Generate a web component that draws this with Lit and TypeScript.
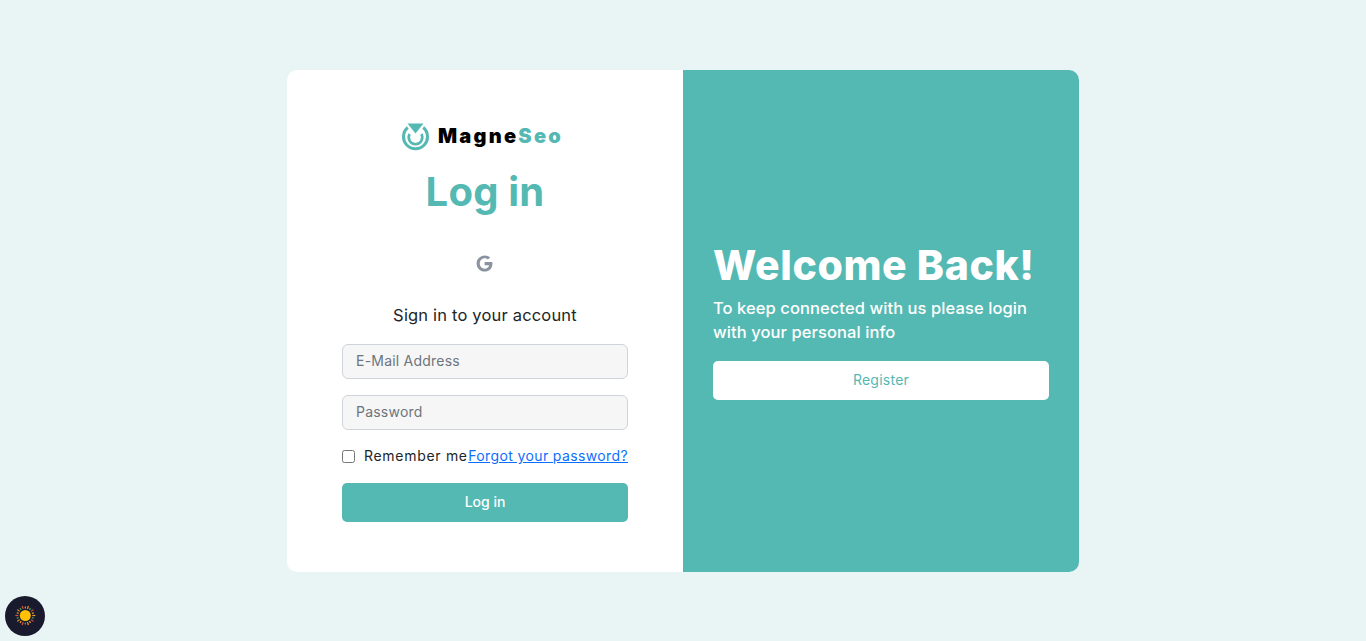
import { LitElement, html, svg, css } from "lit";
import { customElement } from "lit/decorators.js";

@customElement("app-root")
export class AppRoot extends LitElement {
  static styles = css`
    :host { display: block; height: 641px; background: #e9f5f5; font-family: Inter, "Open Sans", sans-serif; position: relative; overflow: hidden; }
    .page { height: 641px; display: flex; justify-content: center; padding-top: 70px; box-sizing: border-box; }
    .card { width: 792px; height: 502px; display: flex; border-radius: 10px; overflow: hidden; }
    .left { width: 396px; background: #fff; padding: 0 55px; box-sizing: border-box; display: flex; flex-direction: column; align-items: center; }
    .logo { margin-top: 53px; height: 28px; display: flex; align-items: center; gap: 9px; margin-left: -5px; }
    .logo svg { display: block; }
    .brand { font-size: 20px; font-weight: 900; letter-spacing: 2.25px; color: #000; line-height: 28px; padding-bottom: 2px; }
    .brand span { color: #55b9b3; }
    h1 { margin: 17px 0 0; font-size: 40px; line-height: 48px; font-weight: 700; color: #55b9b3; letter-spacing: 0.2px; }
    .g { margin-top: 38px; margin-left: -1px; display: block; }
    .sign { margin: 30px 0 0; font-size: 16.5px; line-height: 24px; color: #212529; letter-spacing: 0.18px; }
    .field { width: 100%; height: 35px; box-sizing: border-box; margin-top: 16px; border: 1px solid #ced4da; border-radius: 6px; background: #f6f6f6; padding: 0 13px 2px; display: flex; align-items: center; font-size: 14px; color: #6c757d; letter-spacing: 0.22px; }
    .sign + .field { margin-top: 17px; }
    .row { width: 100%; display: flex; justify-content: space-between; align-items: center; margin-top: 16px; height: 21px; font-size: 14px; line-height: 20px; color: #212529; white-space: nowrap; }
    .check { display: flex; align-items: center; gap: 9px; letter-spacing: 0.7px; }
    .box { width: 13px; height: 13px; box-sizing: border-box; border: 1px solid #767676; border-radius: 2.5px; background: #fff; }
    .rowtext { margin-top: -1px; }
    a { color: #0d6efd; text-decoration: underline; letter-spacing: 0.38px; margin-top: -1px; }
    .btn { width: 100%; height: 39px; margin-top: 16px; border-radius: 5px; background: #55b9b3; color: #fff; font-size: 14px; font-weight: 500; display: flex; align-items: center; justify-content: center; padding-bottom: 2px; box-sizing: border-box; }
    .right { width: 396px; background: #55b9b3; padding: 0 30px; box-sizing: border-box; display: flex; flex-direction: column; justify-content: center; color: #fff; }
    h2 { margin: -1px 0 0; font-size: 41px; line-height: 49px; font-weight: 800; letter-spacing: 0.6px; white-space: nowrap; }
    .right p { margin: 6px 0 0; font-size: 16.5px; line-height: 24px; font-weight: 500; letter-spacing: 0.08px; }
    .reg { margin-top: 17px; height: 39px; border-radius: 5px; background: #fff; color: #55b9b3; font-size: 14px; letter-spacing: 0.25px; display: flex; align-items: center; justify-content: center; padding-bottom: 2px; box-sizing: border-box; }
    .theme { position: absolute; left: 5px; top: 596px; width: 40px; height: 40px; border-radius: 50%; background: #1a1a2e; display: flex; align-items: center; justify-content: center; }
  `;

  private rays() {
    const cols = ["#f0a030", "#4fa35f", "#e0553f", "#f0a030"];
    return Array.from({ length: 20 }, (_, i) => {
      const a = (i * Math.PI) / 10;
      const r1 = 7, r2 = i % 2 ? 9 : 10;
      return svg`<line x1=${20.3 + r1 * Math.cos(a)} y1=${19.5 + r1 * Math.sin(a)} x2=${20.3 + r2 * Math.cos(a)} y2=${19.5 + r2 * Math.sin(a)} stroke=${cols[i % 4]} stroke-width="1.2"></line>`;
    });
  }

  render() {
    return html`
      <div class="page">
        <div class="card">
          <div class="left">
            <div class="logo">
              <svg width="27" height="28" viewBox="0 0 27 28" fill="none">
                <path d="M5.800 4.500A12 12 0 1 0 21.200 4.500" stroke="#55b9b3" stroke-width="3"></path>
                <path d="M7.600 11A6.800 6.800 0 1 0 19.400 11" stroke="#55b9b3" stroke-width="2.600"></path>
                <path d="M5.500 0.500H21.500L13.500 10.500Z" fill="#55b9b3"></path>
              </svg>
              <div class="brand">Magne<span>Seo</span></div>
            </div>
            <h1>Log in</h1>
            <svg class="g" width="19" height="19" viewBox="0 0 24 24">
              <path fill="#8b92a0" d="M12.200 10.200v4h5.600c-.5 2.600-2.700 4.300-5.600 4.300-3.400 0-6.200-2.900-6.200-6.500s2.800-6.500 6.200-6.500c1.600 0 3 .6 4.100 1.600l3-3C17.500 2.900 15 1.800 12.200 1.800 6.500 1.800 2 6.400 2 12s4.500 10.200 10.200 10.200c5.900 0 9.800-4.100 9.800-9.900 0-.7-.1-1.400-.2-2.100H12.200z"></path>
            </svg>
            <p class="sign">Sign in to your account</p>
            <div class="field">E-Mail Address</div>
            <div class="field">Password</div>
            <div class="row">
              <div class="check"><span class="box"></span><span class="rowtext">Remember me</span></div>
              <a>Forgot your password?</a>
            </div>
            <div class="btn">Log in</div>
          </div>
          <div class="right">
            <h2>Welcome Back!</h2>
            <p>To keep connected with us please login with your personal info</p>
            <div class="reg">Register</div>
          </div>
        </div>
      </div>
      <div class="theme">
        <svg width="40" height="40" viewBox="0 0 40 40">
          ${this.rays()}
          <circle cx="20.300" cy="19.500" r="5.500" fill="#ffc107"></circle>
        </svg>
      </div>
    `;
  }
}
